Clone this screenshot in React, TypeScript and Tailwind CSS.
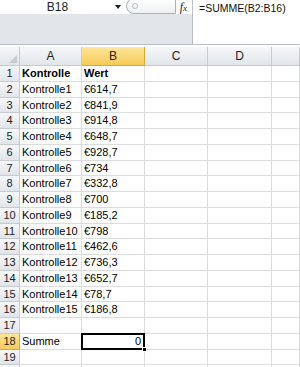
import { Fragment } from 'react';

const rows: [string, string][] = [
  ['Kontrolle', 'Wert'],
  ['Kontrolle1', '€614,7'],
  ['Kontrolle2', '€841,9'],
  ['Kontrolle3', '€914,8'],
  ['Kontrolle4', '€648,7'],
  ['Kontrolle5', '€928,7'],
  ['Kontrolle6', '€734'],
  ['Kontrolle7', '€332,8'],
  ['Kontrolle8', '€700'],
  ['Kontrolle9', '€185,2'],
  ['Kontrolle10', '€798'],
  ['Kontrolle11', '€462,6'],
  ['Kontrolle12', '€736,3'],
  ['Kontrolle13', '€652,7'],
  ['Kontrolle14', '€78,7'],
  ['Kontrolle15', '€186,8'],
  ['', ''],
  ['Summe', ''],
  ['', ''],
  ['', ''],
];

const headCell =
  'flex items-center justify-center border-r border-b border-[#c6cbd2] bg-gradient-to-b from-[#f6f7f9] to-[#e1e5ea] text-[12px] text-[#222]';
const selHead =
  'flex items-center justify-center border-r border-b border-[#d9a93a] bg-gradient-to-b from-[#fde59a] to-[#f7cb55] text-[12px] text-[#222]';
const cell = 'flex items-center border-r border-b border-[#dadcdd] px-[2px] text-[11px] text-black whitespace-nowrap';

export default function App() {
  return (
    <div
      className="w-[300px] h-[367px] overflow-hidden bg-white"
      style={{ fontFamily: '"Liberation Sans", Arial, sans-serif' }}
    >
      {/* formula bar */}
      <div className="flex h-[45px] border-b border-[#b9c0c9]">
        <div className="flex flex-col w-[193px] border-r border-[#b9c0c9]">
          <div className="flex h-[14px] bg-white items-center">
            <div className="w-[115px] text-center text-[12px] text-[#222] leading-none">B18</div>
            <div className="w-0 h-0 border-l-[3px] border-r-[3px] border-t-[4px] border-l-transparent border-r-transparent border-t-[#222]" />
            <div className="ml-[5px] flex items-center w-[50px] h-[16px] -mt-[2px] rounded-bl-[10px] rounded-tl-[10px] border border-[#a9b0b8] bg-gradient-to-b from-white to-[#eef0f2]">
              <div className="ml-[5px] w-[6px] h-[6px] rounded-full border border-[#b8bec5]" />
            </div>
            <div className="ml-auto mr-[5px] text-[12px] italic text-[#222] leading-none" style={{ fontFamily: '"Liberation Serif", serif' }}>
              f<span className="text-[9px]">x</span>
            </div>
          </div>
          <div className="flex-1 bg-[#e2e5e9]" />
        </div>
        <div className="flex-1 bg-white pl-[6px] pt-[1px] text-[10.5px] text-[#111] leading-[14px]">
          =SUMME(B2:B16)
        </div>
      </div>
      <div className="h-[2px] bg-white" />

      {/* sheet */}
      <div className="grid grid-cols-[20px_62px_63px_63px_64px_1fr] grid-rows-[19px_repeat(20,15.75px)]">
        <div className="relative border-r border-b border-[#c6cbd2] bg-gradient-to-b from-[#f6f7f9] to-[#e1e5ea]">
          <div className="absolute right-[2px] bottom-[2px] w-0 h-0 border-t-[8px] border-t-transparent border-r-[8px] border-r-[#c9cdd2]" />
        </div>
        <div className={headCell}>A</div>
        <div className={selHead}>B</div>
        <div className={headCell}>C</div>
        <div className={headCell}>D</div>
        <div className={headCell} />
        {rows.map(([a, b], i) => {
          const n = i + 1;
          const bold = n === 1 ? ' font-bold' : '';
          return (
            <Fragment key={n}>
              <div className={n === 18 ? selHead : headCell}>
                {n < 20 && <span className="text-[11px]">{n}</span>}
              </div>
              <div className={cell + bold}>{a}</div>
              {n === 18 ? (
                <div className={cell + ' relative justify-end'}>
                  <span className="pr-[1px]">0</span>
                  <div className="absolute -left-[1px] -top-[1px] -right-[1px] -bottom-[1px] border-2 border-black" />
                  <div className="absolute -right-[3px] -bottom-[3px] w-[5px] h-[5px] bg-black border border-white" />
                </div>
              ) : (
                <div className={cell + bold}>{b}</div>
              )}
              <div className={cell} />
              <div className={cell} />
              <div className={cell} />
            </Fragment>
          );
        })}
      </div>
    </div>
  );
}
